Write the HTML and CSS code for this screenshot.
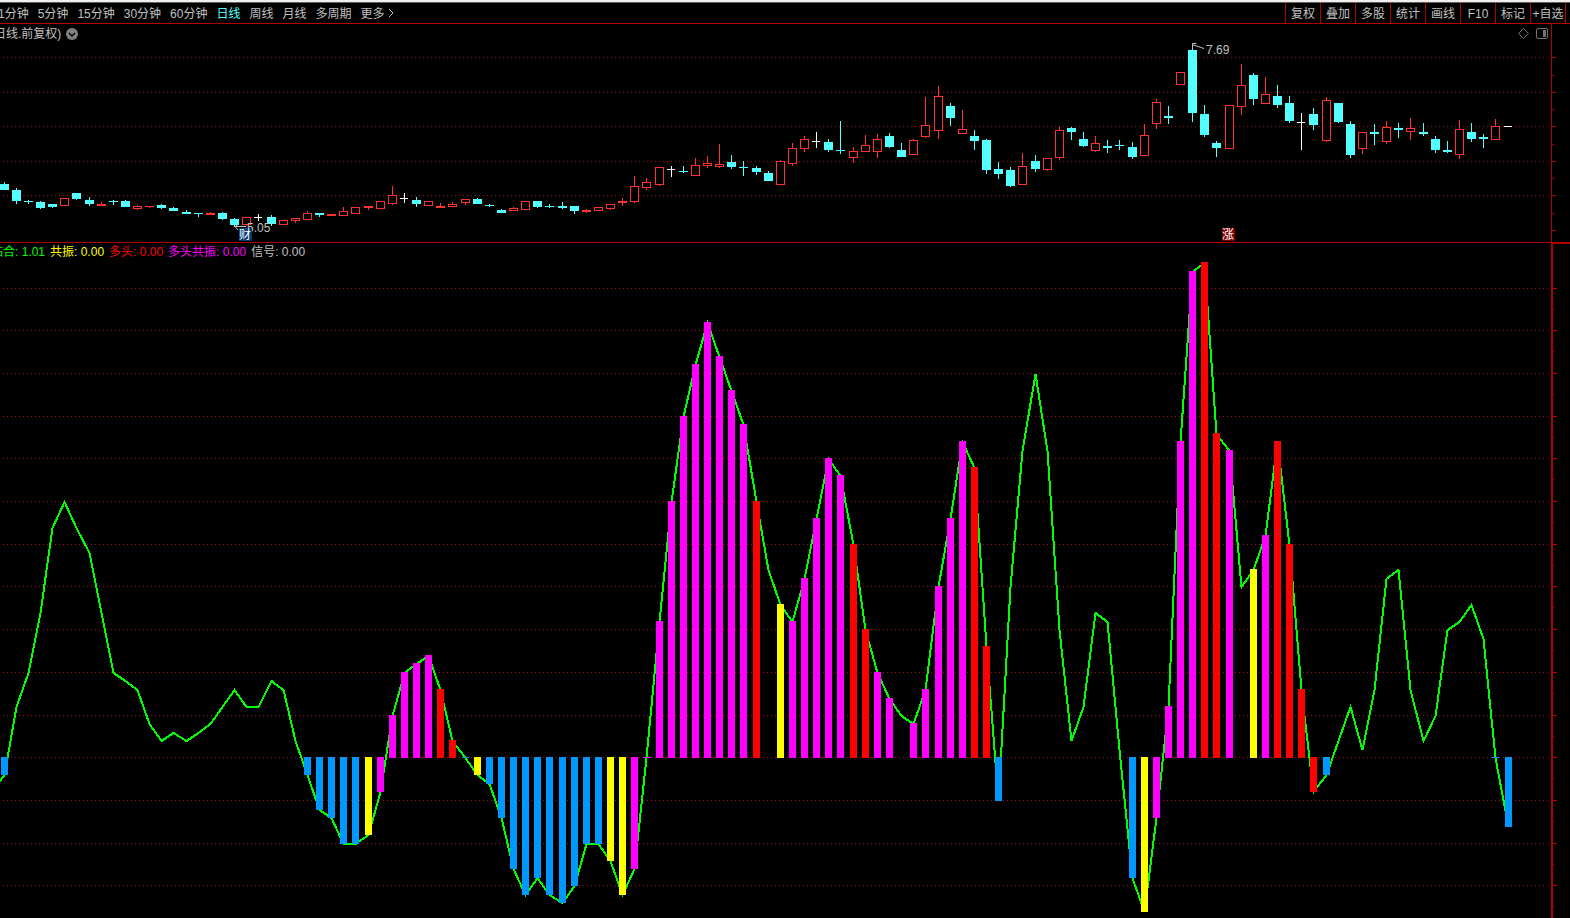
FILE: index.html
```html
<!DOCTYPE html>
<html lang="zh-CN">
  <head>
    <meta charset="UTF-8" />
    <title>日线</title>
    <link rel="stylesheet" href="styles.css">
  </head>
  <body>
    <header class="toolbar">
      <nav class="periods">
        <button type="button">1分钟</button>
        <button type="button">5分钟</button>
        <button type="button">15分钟</button>
        <button type="button">30分钟</button>
        <button type="button">60分钟</button>
        <button type="button" class="active">日线</button>
        <button type="button">周线</button>
        <button type="button">月线</button>
        <button type="button">多周期</button>
        <button type="button" class="more">更多
          <svg width="6" height="10" viewBox="0 0 6 10"><path d="M1 1l4 4-4 4" /></svg>
        </button>
      </nav>
      <div class="tools">
        <button type="button">复权</button>
        <button type="button">叠加</button>
        <button type="button">多股</button>
        <button type="button">统计</button>
        <button type="button">画线</button>
        <button type="button">F10</button>
        <button type="button">标记</button>
        <button type="button">+自选</button>
      </div>
    </header>

    <main>
      <section class="pane price">
        <svg id="priceChart" class="chart"></svg>
        <svg id="priceAxis" class="axis"></svg>
        <div class="pane-title">
          <span>日线.前复权)</span>
          <svg width="12" height="12" viewBox="0 0 12 12">
            <circle cx="6" cy="6" r="6" fill="#808080" />
            <path d="M3 5l3 3 3-3" fill="none" stroke="#000" stroke-width="1.4" />
          </svg>
        </div>
        <div class="pane-icons">
          <svg width="11" height="11" viewBox="0 0 11 11">
            <path d="M5.5 .5l5 5-5 5-5-5z" />
          </svg>
          <svg width="12" height="11" viewBox="0 0 12 11">
            <rect x=".5" y=".5" width="11" height="10" rx="1.5" />
            <rect class="solid" x="7" y="2" width="3" height="7" />
          </svg>
        </div>
      </section>

      <section class="pane indicator">
        <svg id="signalChart" class="chart"></svg>
        <svg id="signalAxis" class="axis"></svg>
        <div class="legend">
          <span class="c-green">粘合: 1.01</span>
          <span class="c-yellow">共振: 0.00</span>
          <span class="c-red">多头: 0.00</span>
          <span class="c-magenta">多头共振: 0.00</span>
          <span class="c-gray">信号: 0.00</span>
        </div>
      </section>
    </main>

    <script src="app.js"></script>
  </body>
</html>
```

FILE: styles.css
```css
/* Reset */
* {
  box-sizing: border-box;
}
html,
body {
  height: 100%;
  margin: 0;
  overflow: hidden;
}
body {
  display: flex;
  flex-direction: column;
  background: #000;
  color: #c0c0c0;
  font-family: "Liberation Sans", "Noto Sans CJK SC", sans-serif;
  font-size: 12px;
  line-height: 18px;
}
button {
  background: none;
  border: none;
  padding: 2px 0 0;
  color: inherit;
  font: inherit;
  white-space: nowrap;
  cursor: pointer;
}

/* Toolbar */
.toolbar {
  flex: none;
  display: flex;
  justify-content: space-between;
  height: 24px;
  border-bottom: 1px solid #b00000;
  background: linear-gradient(#f0f0f0 2px, #606060 2px, #606060 3px, #000 3px);
  padding-top: 3px;
}
.periods {
  display: flex;
  align-items: center;
  gap: 9px;
  margin-left: -2px;
}
.periods .active {
  color: #54ffff;
}
.more svg {
  fill: none;
  stroke: #c0c0c0;
}
.tools {
  display: flex;
  margin-right: 4px;
  border-right: 1px solid #b00000;
}
.tools button {
  width: 35px;
  border-left: 1px solid #b00000;
}

/* Panes */
main {
  flex: 1;
  display: flex;
  flex-direction: column;
  min-height: 0;
}
.pane {
  position: relative;
  display: flex;
}
.price {
  flex: none;
  height: 219px;
  border-bottom: 1px solid #b00000;
}
.indicator {
  flex: 1;
  min-height: 0;
}
.chart {
  flex: 1;
  min-width: 0;
  height: 100%;
}
.axis {
  flex: none;
  width: 19px;
  height: 100%;
  fill: #b00000;
}
.pane-title {
  position: absolute;
  top: 1px;
  left: -6px;
  display: flex;
  align-items: center;
  gap: 5px;
}
.pane-icons {
  position: absolute;
  top: 4px;
  right: 22px;
  display: flex;
  gap: 7px;
}
.pane-icons svg {
  fill: none;
  stroke: #707070;
}
.pane-icons .solid {
  fill: #707070;
  stroke: none;
}
.legend {
  position: absolute;
  top: 0;
  left: -9px;
  display: flex;
  gap: 5px;
  white-space: nowrap;
}

/* Chart parts */
.grid {
  stroke: #a01010;
  stroke-dasharray: 1 3;
}
.up {
  fill: #ff3232;
}
.up-body {
  fill: #000;
  stroke: #ff3232;
}
.down {
  fill: #54ffff;
}
.flat {
  fill: #fff;
}
.curve {
  fill: none;
  stroke: #00ff00;
  stroke-width: 2;
}
.bar-b {
  fill: #0098ff;
}
.bar-y {
  fill: #ffff00;
}
.bar-m {
  fill: #ff00ff;
}
.bar-r {
  fill: #ff0000;
}
.mark {
  fill: #c0c0c0;
}
.arrow {
  fill: none;
  stroke: #c0c0c0;
}
.badge-blue {
  fill: #003870;
}
.badge-red {
  fill: #800000;
}
.badge-text {
  fill: #fff;
}

.c-green {
  color: #00ff00;
}
.c-yellow {
  color: #ffff00;
}
.c-red {
  color: #ff0000;
}
.c-magenta {
  color: #ff00ff;
}
.c-gray {
  color: #c0c0c0;
}
```

FILE: app.js
```js
const SVG_NS = "http://www.w3.org/2000/svg";
const PITCH = 12.1275;
const PRICE_TOP = 24;
const ZERO = 514;
const UNIT = 8.54;

// kind (u = up, d = down, w = flat), high, body top, body bottom, low
const candles = `
d 182 184 190 190|d 188 190 201 204|d 200 201 202 204|d 201 202 208 209|d 204 204 207 208
u 198 198 206 206|d 193 193 199 200|d 197 200 204 206|u 202 204 206 206|d 200 201 202 205
d 200 201 207 207|u 205 206 209 210|u 206 206 207 208|d 204 205 208 209|d 207 208 211 211
d 210 212 214 214|d 213 213 214 217|u 212 213 215 215|d 212 213 219 220|d 218 219 225 226
u 217 217 225 226|w 214 217 218 221|d 215 217 224 226|u 220 220 225 225|u 218 218 221 223
u 211 213 220 220|d 213 213 215 217|u 214 214 216 216|u 207 211 216 216|u 207 207 214 214
u 206 206 208 210|u 201 201 209 209|u 186 195 204 205|w 193 198 199 203|d 197 200 204 207
u 201 201 206 206|u 203 206 208 208|u 202 204 207 207|u 199 199 203 205|d 198 199 204 204
d 204 205 206 207|d 209 210 213 213|u 207 208 211 211|u 201 201 210 210|d 201 201 207 208
d 204 206 207 208|d 202 206 208 209|d 206 206 211 214|u 209 210 212 213|u 207 207 211 211
u 204 204 209 210|u 198 201 203 206|u 176 186 202 203|u 178 182 188 190|u 167 167 185 186
w 166 169 170 177|d 166 171 172 173|u 158 165 176 176|u 156 163 166 168|u 144 164 167 168
d 155 162 167 169|d 161 167 168 176|d 166 168 172 175|d 171 173 181 181|u 160 161 185 185
u 143 148 164 166|u 136 139 149 152|w 132 141 142 148|d 139 142 150 152|d 121 150 151 154
u 147 151 158 163|u 135 145 152 152|u 134 139 152 158|d 133 136 147 148|d 143 150 157 157
u 139 140 155 155|u 97 125 137 138|u 86 96 131 139|d 103 106 118 126|u 110 129 134 134
d 130 136 141 150|d 139 140 170 174|d 162 169 174 179|d 167 170 186 187|u 153 166 185 185
d 155 161 169 172|u 158 158 170 171|u 127 130 158 160|d 127 128 132 140|d 132 139 146 147
u 136 143 151 152|d 140 146 148 153|d 140 145 146 150|d 142 147 157 159|u 124 135 156 156
u 99 102 124 129|d 106 116 118 124|u 72 72 85 85|d 45 50 113 122|d 105 114 135 137
d 141 143 148 157|u 105 105 149 149|u 64 85 107 115|d 73 75 99 105|u 77 94 104 104
d 85 96 105 108|d 96 103 121 123|w 113 122 123 150|d 108 114 125 130|u 97 100 141 142
d 103 103 122 123|d 121 124 155 158|u 132 132 149 154|d 124 132 134 145|u 121 127 142 144
d 123 128 130 138|u 118 128 132 140|d 123 132 134 136|d 136 139 150 153|d 141 150 152 153
u 120 129 155 159|d 123 132 139 142|d 134 137 139 148|u 119 126 140 140|w 126 126 127 127
`.trim().split(/[|\n]/);

// value, with a colour letter where the day also has a bar
const signals = `
-2b 6 10 17 27 30 27 24 17 10 9 8 4 2 3 2 3 4 6 8 6 6 9 8 2
-2b -6b -7b -10b -10b -9y -4m 5m 10m 11m 12m 8r 2r 0b -2y
-3b -7b -13b -16b -14b -16b -17b -15b -10b -10b -12y -16y -13m 0m 16m
30m 40m 46m 51m 47m 43m 39m 30r 22 18y 16m 21m 28m 35m 33m 25r 15r 10m 7m 5
4m 8m 20m 28m 37m 34r 13r -5b 20 36 45 36 15 2 6 17 16 1
-14b -18y -7m 6m 37m 57m 58r 38r 36m 20 22y 26m 37r 25r 8r -4r -2b
2 6 1 8 21 22 8 2 5 15 16 18 14 0b -8b
`.trim().split(/\s+/);

function add(parent, name, attrs, text) {
  const el = document.createElementNS(SVG_NS, name);
  for (const key in attrs) el.setAttribute(key, attrs[key]);
  if (text) el.textContent = text;
  parent.appendChild(el);
  return el;
}

function rect(parent, cls, x, y, width, height) {
  if (height > 0) add(parent, "rect", { class: cls, x, y, width, height });
}

function barLeft(i) {
  return Math.floor(1.2 + i * PITCH);
}

function drawGrid(svg, rows) {
  rows.forEach((y) => {
    add(svg, "line", { class: "grid", x1: 3, x2: "100%", y1: y + 0.5, y2: y + 0.5 });
  });
}

function drawPrice() {
  const svg = document.getElementById("priceChart");
  drawGrid(svg, [33, 68, 102, 137, 171]);

  candles.forEach((row, i) => {
    const [kind, ...values] = row.split(" ");
    const [high, top, bottom, low] = values.map((v) => v - PRICE_TOP);
    const x = barLeft(i);
    const cls = { u: "up", d: "down", w: "flat" }[kind];
    rect(svg, cls, x + 3, high, 1, top - high);
    rect(svg, cls, x + 3, bottom, 1, low - bottom);
    if (kind === "u" && bottom - top > 2) {
      rect(svg, "up-body", x - 0.5, top + 0.5, 8, bottom - top - 1);
    } else {
      rect(svg, cls, x - 1, top, kind === "w" ? 8 : 9, bottom - top);
    }
  });

  // highest and lowest price marks
  add(svg, "path", { class: "arrow", d: "M1204 24.5l-12-4M1192.5 25v-5.5h4" });
  add(svg, "text", { class: "mark", x: 1206, y: 30 }, "7.69");
  add(svg, "path", { class: "arrow", d: "M246 202.5h-12M238 206l-3-3.5 3-2" });
  add(svg, "text", { class: "mark", x: 247, y: 208 }, "5.05");

  rect(svg, "badge-blue", 239, 204, 13, 13);
  add(svg, "text", { class: "badge-text", x: 239, y: 215 }, "财");
  rect(svg, "badge-red", 1222, 204, 13, 13);
  add(svg, "text", { class: "badge-text", x: 1222, y: 215 }, "涨");

  const axis = document.getElementById("priceAxis");
  rect(axis, "", 0, 0, 1, 218);
  [33, 68, 102, 137, 171, 206].forEach((y) => rect(axis, "", 1, y, 4, 1));
  [51, 85, 120, 154, 189].forEach((y) => rect(axis, "", 1, y, 2, 1));
}

function drawSignals() {
  const svg = document.getElementById("signalChart");
  const axis = document.getElementById("signalAxis");
  const yOf = (value) => Math.ceil(ZERO - 0.2 - value * UNIT);
  const rows = [];
  for (let v = 55; v >= -15; v -= 5) rows.push(yOf(v));
  drawGrid(svg, rows);

  const points = signals.map((s, i) => `${barLeft(i) + 3.5},${yOf(parseInt(s, 10)) + 1}`);
  points.unshift("-8,549");
  add(svg, "polyline", { class: "curve", points: points.join(" "), "shape-rendering": "crispEdges" });

  signals.forEach((s, i) => {
    const color = s.match(/[bymr]/);
    if (!color) return;
    const value = parseInt(s, 10);
    const y = yOf(value);
    const cls = "bar-" + color[0];
    if (value > 0) rect(svg, cls, barLeft(i), y, 7, ZERO + 1 - y);
    else rect(svg, cls, barLeft(i), ZERO, 7, y - ZERO + 1);
  });

  rect(axis, "", 0, 0, 19, 1);
  add(axis, "rect", { x: 0, y: 0, width: 2, height: "100%" });
  rows.forEach((y) => {
    rect(axis, "", 2, y, 4, 1);
    rect(axis, "", 2, y + 21, 1, 1);
  });
}

drawPrice();
drawSignals();
```
